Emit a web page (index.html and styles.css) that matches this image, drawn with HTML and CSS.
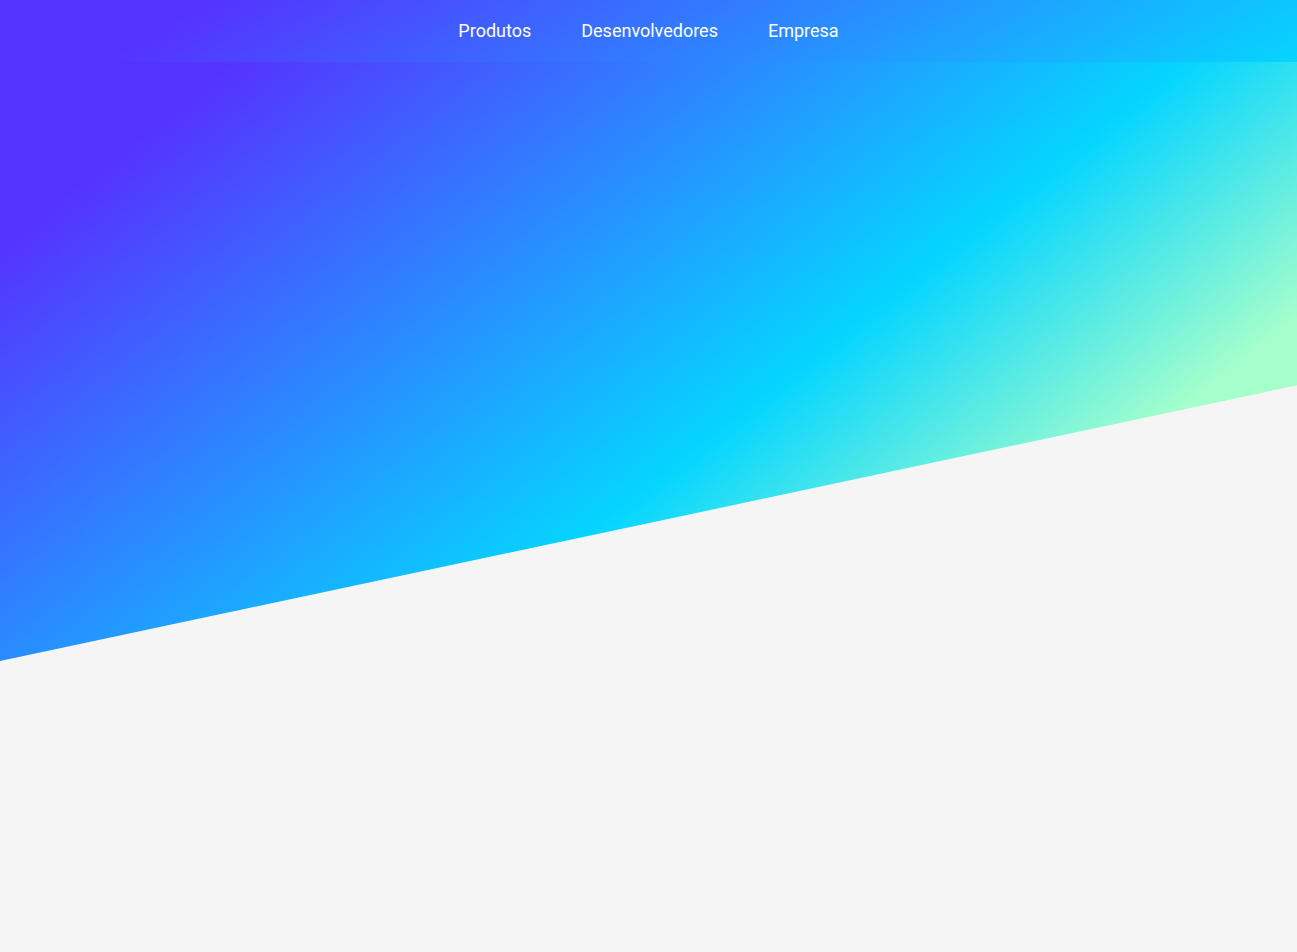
FILE: index.html
```html
<!DOCTYPE html>
<html lang="pt">
<head>
<meta charset="utf-8">
<title>Menu</title>
<link rel="stylesheet" href="styles.css">
</head>
<body>
<div class="hero"></div>
<header class="topbar">
  <nav class="menu">
    <a class="menu-item" href="#">Produtos</a>
    <a class="menu-item" href="#">Desenvolvedores</a>
    <a class="menu-item" href="#">Empresa</a>
  </nav>
</header>
</body>
</html>
```
FILE: styles.css
```css
html, body {
  margin: 0;
  padding: 0;
  height: 100%;
}
body {
  background: #f5f5f5;
  font-family: Roboto, "Liberation Sans", sans-serif;
  overflow: hidden;
  position: relative;
}
.hero {
  position: absolute;
  left: 0;
  top: 0;
  width: 100%;
  height: 661px;
  background: linear-gradient(150deg, #53f 17.5%, #05d5ff 71%, #a6ffcb 95.5%);
  transform: skewY(-12deg);
  transform-origin: 0 0;
}
.topbar {
  position: relative;
  height: 62px;
  background: linear-gradient(150deg, #53f 15%, #05d5ff 100%);
  display: flex;
  justify-content: center;
  align-items: center;
}
.menu {
  display: flex;
  gap: 50px;
}
.menu-item {
  color: #fff;
  text-decoration: none;
  font-size: 18px;
  line-height: 22px;
}
```
